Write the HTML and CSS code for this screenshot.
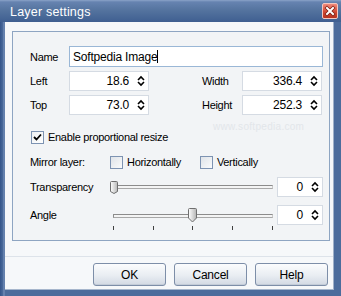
FILE: index.html
```html
<!DOCTYPE html>
<html lang="en">
<head>
    <meta charset="UTF-8">
    <title>Layer settings</title>
    <link rel="stylesheet" href="styles.css">
</head>
<body>
    <div class="window">
        <div class="titlebar">
            <span class="title">Layer settings</span>
            <span class="close">
                <svg width="14" height="14" viewBox="0 0 14 14">
                    <path d="M4 4 L10 10 M10 4 L4 10" stroke="#7a1a10" stroke-width="3.4" stroke-linecap="square"/>
                    <path d="M4 4 L10 10 M10 4 L4 10" stroke="#fff" stroke-width="2" stroke-linecap="square"/>
                </svg>
            </span>
        </div>
        <div class="frame">
            <div class="client">
                <div class="group">
                    <div class="row">
                        <span class="lbl">Name</span>
                        <div class="edit">Softpedia Image<span class="caret"></span></div>
                    </div>

                    <div class="row gap4">
                        <span class="lbl">Left</span>
                        <div class="spin">18.6
                            <svg class="arrows" width="8" height="12" viewBox="0 0 8 12"><path d="M1 5 L4 2 L7 5 M1 7 L4 10 L7 7" fill="none" stroke="#000" stroke-width="1.6"/></svg>
                        </div>
                        <span class="lbl lbl-right">Width</span>
                        <div class="spin">336.4
                            <svg class="arrows" width="8" height="12" viewBox="0 0 8 12"><path d="M1 5 L4 2 L7 5 M1 7 L4 10 L7 7" fill="none" stroke="#000" stroke-width="1.6"/></svg>
                        </div>
                    </div>

                    <div class="row gap4">
                        <span class="lbl">Top</span>
                        <div class="spin">73.0
                            <svg class="arrows" width="8" height="12" viewBox="0 0 8 12"><path d="M1 5 L4 2 L7 5 M1 7 L4 10 L7 7" fill="none" stroke="#000" stroke-width="1.6"/></svg>
                        </div>
                        <span class="lbl lbl-right">Height</span>
                        <div class="spin">252.3
                            <svg class="arrows" width="8" height="12" viewBox="0 0 8 12"><path d="M1 5 L4 2 L7 5 M1 7 L4 10 L7 7" fill="none" stroke="#000" stroke-width="1.6"/></svg>
                        </div>
                    </div>

                    <div class="row check-row">
                        <span class="check checked">
                            <svg width="11" height="11" viewBox="0 0 11 11"><path d="M2 5 L4.5 7.5 L9 2.5" fill="none" stroke="#000" stroke-width="1.8"/></svg>
                        </span>
                        <span class="check-text">Enable proportional resize</span>
                        <span class="mark-url">www.softpedia.com</span>
                    </div>

                    <div class="row mirror-row">
                        <span class="lbl lbl-wide">Mirror layer:</span>
                        <span class="check"></span>
                        <span class="check-text">Horizontally</span>
                        <span class="check second"></span>
                        <span class="check-text">Vertically</span>
                    </div>

                    <div class="row trans-row">
                        <span class="lbl lbl-wide">Transparency</span>
                        <div class="slider">
                            <div class="track"></div>
                            <svg class="thumb thumb-flat" width="8" height="13" viewBox="0 0 8 13">
                                <defs><linearGradient id="tg" x1="0" x2="1"><stop offset="0" stop-color="#fff"/><stop offset="1" stop-color="#b8b8b8"/></linearGradient></defs>
                                <path d="M1.5 0.5 H6.5 Q7.5 0.5 7.5 1.5 V10.5 L4 12.5 L0.5 10.5 V1.5 Q0.5 0.5 1.5 0.5 Z" fill="url(#tg)" stroke="#6f6f6f"/>
                            </svg>
                        </div>
                        <div class="spin small">0
                            <svg class="arrows" width="8" height="12" viewBox="0 0 8 12"><path d="M1 5 L4 2 L7 5 M1 7 L4 10 L7 7" fill="none" stroke="#000" stroke-width="1.6"/></svg>
                        </div>
                    </div>

                    <div class="row angle-row">
                        <span class="lbl lbl-wide">Angle</span>
                        <div class="slider ticked">
                            <div class="track"></div>
                            <svg class="thumb thumb-down" width="9" height="15" viewBox="0 0 9 15">
                                <defs><linearGradient id="tg2" x1="0" x2="1"><stop offset="0" stop-color="#fff"/><stop offset="1" stop-color="#b4b4b4"/></linearGradient></defs>
                                <path d="M1.5 0.5 H7.5 Q8.5 0.5 8.5 1.5 V10 L4.5 14 L0.5 10 V1.5 Q0.5 0.5 1.5 0.5 Z" fill="url(#tg2)" stroke="#6f6f6f"/>
                            </svg>
                            <span class="tick t0"></span>
                            <span class="tick t1"></span>
                            <span class="tick t2"></span>
                            <span class="tick t3"></span>
                            <span class="tick t4"></span>
                        </div>
                        <div class="spin small">0
                            <svg class="arrows" width="8" height="12" viewBox="0 0 8 12"><path d="M1 5 L4 2 L7 5 M1 7 L4 10 L7 7" fill="none" stroke="#000" stroke-width="1.6"/></svg>
                        </div>
                    </div>
                </div>

                <div class="footer">
                    <button class="btn">OK</button>
                    <button class="btn">Cancel</button>
                    <button class="btn">Help</button>
                </div>
            </div>
        </div>
    </div>
</body>
</html>
```

FILE: styles.css
```css
body {
    margin: 0;
    padding: 0;
    font-family: "Liberation Sans", Arial, sans-serif;
    font-size: 11px;
    letter-spacing: -0.3px;
    color: #000;
    background: #fff;
}
.window {
    width: 341px;
    height: 296px;
    display: flex;
    flex-direction: column;
    overflow: hidden;
}
.titlebar {
    height: 22px;
    flex: none;
    display: flex;
    align-items: center;
    justify-content: space-between;
    padding: 0 3px 0 10px;
    background: linear-gradient(#8ba3c8 0, #6683b0 2px, #55749f 45%, #3f5f91 100%);
    color: #fff;
}
.title {
    font-size: 12.5px;
    letter-spacing: 0.2px;
    padding-top: 1px;
}
.close {
    width: 14px;
    height: 14px;
    border: 1px solid #f3c6bf;
    border-radius: 2px;
    background: linear-gradient(#f08a7c, #d24a35 55%, #b8321f);
    display: flex;
}
.frame {
    flex: 1;
    display: flex;
    padding: 0 7px 6px 5px;
    background: linear-gradient(90deg, #35558a 0, #4c6c9c 3px, #7d96bf 4px, #4c6c9c 5px);
}
.client {
    flex: 1;
    display: flex;
    flex-direction: column;
    background: #f6f8fa;
    border-bottom: 1px solid #a6b6cc;
    border-right: 1px solid #9fb0c8;
}
.group {
    position: relative;
    box-sizing: border-box;
    width: 318px;
    height: 210px;
    margin: 9px 0 0 7px;
    padding: 14px 6px 0 17px;
    border: 1px solid #8ea5c2;
    background: #f2f4f6;
}
.row {
    position: relative;
    display: flex;
    align-items: center;
    height: 20px;
}
.row:first-child {
    height: 21px;
}
.gap4 {
    margin-top: 4px;
}
.lbl {
    width: 39px;
    flex: none;
}
.lbl-right {
    margin-left: 53px;
    width: 40px;
}
.lbl-wide {
    width: 80px;
}
.edit {
    box-sizing: border-box;
    flex: 1;
    height: 21px;
    border: 1px solid #9ab7d6;
    background: #fff;
    padding: 0 3px;
    display: flex;
    align-items: center;
    font-size: 12px;
    letter-spacing: -0.2px;
}
.caret {
    width: 1px;
    height: 13px;
    background: #000;
}
.spin {
    box-sizing: border-box;
    width: 80px;
    height: 20px;
    border: 1px solid #d5dbe3;
    background: #fff;
    display: flex;
    align-items: center;
    justify-content: flex-end;
    font-size: 12px;
    letter-spacing: -0.2px;
}
.spin.small {
    width: 46px;
    margin-left: auto;
}
.arrows {
    margin: 0 3px 0 8px;
}
.check-row {
    margin-top: 12px;
}
.mirror-row {
    margin-top: 5px;
}
.trans-row {
    margin-top: 5px;
}
.angle-row {
    margin-top: 8px;
}
.check {
    box-sizing: border-box;
    width: 13px;
    height: 13px;
    flex: none;
    border: 1px solid #7d93b2;
    background: linear-gradient(135deg, #dfe3e8, #fafbfc);
    display: flex;
    align-items: center;
    justify-content: center;
}
.check-row .check {
    margin-left: 1px;
}
.check.checked {
    background: linear-gradient(135deg, #eef0f2, #fff);
}
.check-text {
    margin-left: 4px;
}
.check.second {
    margin-left: 19px;
}
.slider {
    position: relative;
    width: 163px;
    height: 20px;
    display: flex;
    align-items: center;
}
.track {
    box-sizing: border-box;
    width: 100%;
    height: 4px;
    border: 1px solid #8c8c8c;
    border-right-color: #c8c8c8;
    border-bottom-color: #a8a8a8;
    background: #f4f4f4;
}
.thumb {
    position: absolute;
}
.thumb-flat {
    left: 0;
    top: 4px;
}
.ticked {
    margin-left: 3px;
    width: 160px;
    align-items: flex-start;
}
.ticked .track {
    margin-top: 9px;
}
.thumb-down {
    left: 75px;
    top: 3px;
}
.tick {
    position: absolute;
    top: 21px;
    width: 1px;
    height: 4px;
    background: #404040;
}
.t0 { left: 0; }
.t1 { left: 40px; }
.t2 { left: 79px; }
.t3 { left: 119px; }
.t4 { left: 159px; }
.mark-url {
    position: absolute;
    left: 183px;
    top: -6px;
    font-size: 10px;
    color: #e2e6ea;
    letter-spacing: 0.3px;
}
.footer {
    margin-top: 15px;
    border-top: 1px solid #dde3ea;
    display: flex;
    justify-content: flex-end;
    gap: 8px;
    padding: 6px 5px 0 0;
}
.btn {
    box-sizing: border-box;
    width: 73px;
    height: 23px;
    border: 1px solid #7d8ea8;
    border-radius: 3px;
    background: linear-gradient(#fbfcfd, #e9edf2 55%, #d2d9e3);
    box-shadow: inset 0 -1px 0 #c3ccd8;
    font-family: "Liberation Sans", Arial, sans-serif;
    font-size: 12px;
    letter-spacing: -0.2px;
    color: #000;
    padding: 0;
}
```
